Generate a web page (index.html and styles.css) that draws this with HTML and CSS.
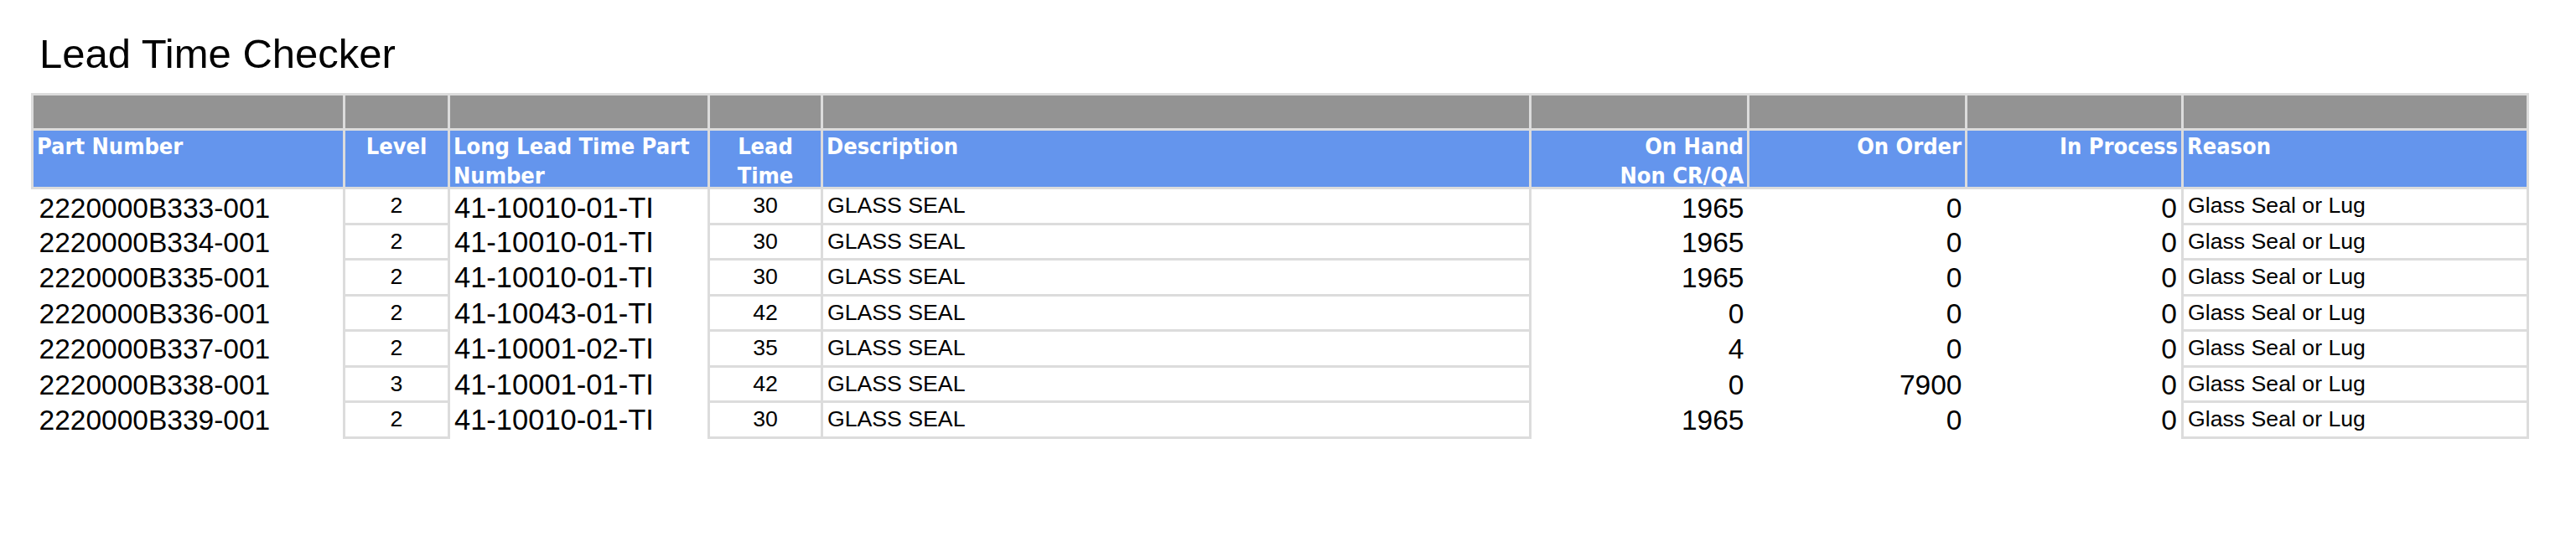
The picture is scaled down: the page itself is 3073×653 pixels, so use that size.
FILE: index.html
```html
<!DOCTYPE html>
<html lang="en">
<head>
<meta charset="utf-8">
<title>Lead Time Checker</title>
<link rel="stylesheet" href="styles.css">
</head>
<body>
<div class="page">
  <h1 class="title">Lead Time Checker</h1>
  <table class="grid">
    <colgroup>
      <col class="w-part">
      <col class="w-level">
      <col class="w-llt">
      <col class="w-lt">
      <col class="w-desc">
      <col class="w-hand">
      <col class="w-order">
      <col class="w-proc">
      <col class="w-reason">
    </colgroup>
    <thead>
      <tr class="band">
        <th></th><th></th><th></th><th></th><th></th><th></th><th></th><th></th><th></th>
      </tr>
      <tr class="heads">
        <th class="al-l"><div class="hd">Part Number</div></th>
        <th class="al-c"><div class="hd">Level</div></th>
        <th class="al-l"><div class="hd">Long Lead Time Part<br>Number</div></th>
        <th class="al-c"><div class="hd">Lead<br>Time</div></th>
        <th class="al-l"><div class="hd">Description</div></th>
        <th class="al-r"><div class="hd">On Hand<br>Non CR/QA</div></th>
        <th class="al-r"><div class="hd">On Order</div></th>
        <th class="al-r"><div class="hd">In Process</div></th>
        <th class="al-l"><div class="hd">Reason</div></th>
      </tr>
    </thead>
    <tbody>
      <tr>
        <td class="big part al-l">2220000B333-001</td>
        <td class="small boxed al-c">2</td>
        <td class="big llt al-l">41-10010-01-TI</td>
        <td class="small boxed al-c">30</td>
        <td class="small boxed al-l">GLASS SEAL</td>
        <td class="big al-r">1965</td>
        <td class="big al-r">0</td>
        <td class="big al-r">0</td>
        <td class="small boxed al-l">Glass Seal or Lug</td>
      </tr>
      <tr>
        <td class="big part al-l">2220000B334-001</td>
        <td class="small boxed al-c">2</td>
        <td class="big llt al-l">41-10010-01-TI</td>
        <td class="small boxed al-c">30</td>
        <td class="small boxed al-l">GLASS SEAL</td>
        <td class="big al-r">1965</td>
        <td class="big al-r">0</td>
        <td class="big al-r">0</td>
        <td class="small boxed al-l">Glass Seal or Lug</td>
      </tr>
      <tr>
        <td class="big part al-l">2220000B335-001</td>
        <td class="small boxed al-c">2</td>
        <td class="big llt al-l">41-10010-01-TI</td>
        <td class="small boxed al-c">30</td>
        <td class="small boxed al-l">GLASS SEAL</td>
        <td class="big al-r">1965</td>
        <td class="big al-r">0</td>
        <td class="big al-r">0</td>
        <td class="small boxed al-l">Glass Seal or Lug</td>
      </tr>
      <tr>
        <td class="big part al-l">2220000B336-001</td>
        <td class="small boxed al-c">2</td>
        <td class="big llt al-l">41-10043-01-TI</td>
        <td class="small boxed al-c">42</td>
        <td class="small boxed al-l">GLASS SEAL</td>
        <td class="big al-r">0</td>
        <td class="big al-r">0</td>
        <td class="big al-r">0</td>
        <td class="small boxed al-l">Glass Seal or Lug</td>
      </tr>
      <tr>
        <td class="big part al-l">2220000B337-001</td>
        <td class="small boxed al-c">2</td>
        <td class="big llt al-l">41-10001-02-TI</td>
        <td class="small boxed al-c">35</td>
        <td class="small boxed al-l">GLASS SEAL</td>
        <td class="big al-r">4</td>
        <td class="big al-r">0</td>
        <td class="big al-r">0</td>
        <td class="small boxed al-l">Glass Seal or Lug</td>
      </tr>
      <tr>
        <td class="big part al-l">2220000B338-001</td>
        <td class="small boxed al-c">3</td>
        <td class="big llt al-l">41-10001-01-TI</td>
        <td class="small boxed al-c">42</td>
        <td class="small boxed al-l">GLASS SEAL</td>
        <td class="big al-r">0</td>
        <td class="big al-r">7900</td>
        <td class="big al-r">0</td>
        <td class="small boxed al-l">Glass Seal or Lug</td>
      </tr>
      <tr>
        <td class="big part al-l">2220000B339-001</td>
        <td class="small boxed al-c">2</td>
        <td class="big llt al-l">41-10010-01-TI</td>
        <td class="small boxed al-c">30</td>
        <td class="small boxed al-l">GLASS SEAL</td>
        <td class="big al-r">1965</td>
        <td class="big al-r">0</td>
        <td class="big al-r">0</td>
        <td class="small boxed al-l">Glass Seal or Lug</td>
      </tr>
    </tbody>
  </table>
</div>
</body>
</html>
```
FILE: styles.css
```css
html, body {
  margin: 0;
  padding: 0;
  background: #ffffff;
}

.page {
  padding: 37px 0 0 37px;
}

.title {
  margin: 0 0 19px 10px;
  font-family: "Liberation Sans", Arial, sans-serif;
  font-size: 49px;
  font-weight: normal;
  line-height: 55px;
  color: #000000;
}

.grid {
  border-collapse: collapse;
  table-layout: fixed;
  width: 2977px;
}

.w-part { width: 372px; }
.w-level { width: 125px; }
.w-llt { width: 310px; }
.w-lt { width: 135px; }
.w-desc { width: 845px; }
.w-hand { width: 260px; }
.w-order { width: 260px; }
.w-proc { width: 258px; }
.w-reason { width: 412px; }

.grid th {
  border: 3px solid #dcdcdc;
  padding: 0 4px;
  vertical-align: top;
}

.band th {
  background: #939393;
  height: 39px;
}

.heads th {
  background: #6495ed;
  color: #ffffff;
  font-family: "DejaVu Sans Condensed", "DejaVu Sans", sans-serif;
  font-stretch: condensed;
  font-weight: bold;
  font-size: 27px;
  line-height: 35px;
  padding-top: 1px;
  padding-bottom: 0;
}

.hd {
  height: 66px;
}

.grid tbody tr {
  height: 42.5px;
}

.grid td {
  padding: 0 5px;
  vertical-align: top;
  color: #000000;
  font-family: "Liberation Sans", Arial, sans-serif;
  white-space: nowrap;
}

.grid td.big {
  font-size: 33.5px;
  line-height: 37px;
  padding-top: 3.5px;
}

.grid td.part {
  padding-left: 8px;
}

.grid td.llt {
  font-size: 34.5px;
}

.grid td.small {
  font-size: 26.67px;
  line-height: 30px;
  padding-top: 4px;
}

.grid td.boxed {
  border: 3px solid #dcdcdc;
}

.al-l { text-align: left; }
.al-c { text-align: center; }
.al-r { text-align: right; }
```
